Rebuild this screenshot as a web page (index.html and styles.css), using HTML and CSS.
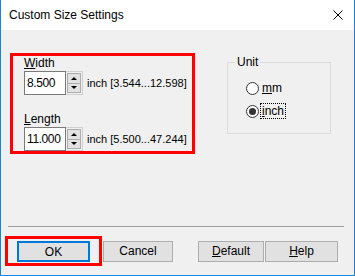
FILE: index.html
```html
<!DOCTYPE html>
<html>
<head>
    <title>Custom Size Settings</title>
    <link rel="stylesheet" href="styles.css">
</head>
<body>
    <div class="window">
        <div class="titlebar">
            <span class="title">Custom Size Settings</span>
            <svg class="close" width="10" height="10" viewBox="0 0 10 10">
                <path d="M0.5 0.5 L9.5 9.5 M9.5 0.5 L0.5 9.5" stroke="#000" stroke-width="1"/>
            </svg>
        </div>
        <div class="content">
            <div class="top">
                <div class="size-box">
                    <div class="field-label"><u>W</u>idth</div>
                    <div class="field">
                        <div class="edit">8.500</div>
                        <div class="spin">
                            <div class="spin-btn"><span class="arrow up"></span></div>
                            <div class="spin-btn"><span class="arrow down"></span></div>
                        </div>
                        <span class="range">inch [3.544...12.598]</span>
                    </div>

                    <div class="field-label second"><u>L</u>ength</div>
                    <div class="field">
                        <div class="edit">11.000</div>
                        <div class="spin">
                            <div class="spin-btn"><span class="arrow up"></span></div>
                            <div class="spin-btn"><span class="arrow down"></span></div>
                        </div>
                        <span class="range">inch [5.500...47.244]</span>
                    </div>
                </div>

                <fieldset class="unit">
                    <legend>Unit</legend>
                    <div class="radios">
                        <div class="radio">
                            <span class="circle"></span>
                            <span class="radio-text"><u>m</u>m</span>
                        </div>
                        <div class="radio">
                            <span class="circle checked"></span>
                            <span class="radio-text focus"><u>i</u>nch</span>
                        </div>
                    </div>
                </fieldset>
            </div>

            <div class="separator"></div>

            <div class="buttons">
                <div class="highlight">
                    <button class="btn btn-focus">OK</button>
                </div>
                <button class="btn btn-cancel">Cancel</button>
                <button class="btn btn-default"><u>D</u>efault</button>
                <button class="btn btn-help"><u>H</u>elp</button>
            </div>
        </div>
    </div>
</body>
</html>
```

FILE: styles.css
```css
body {
    margin: 0;
    font-family: "Liberation Sans", Arial, sans-serif;
    font-size: 12px;
    color: #000;
}

.window {
    width: 355px;
    height: 276px;
    box-sizing: border-box;
    border: 1px solid #1883d7;
    border-top: none;
    display: flex;
    flex-direction: column;
    background-color: #f0f0f0;
}

.titlebar {
    height: 30px;
    background-color: #fff;
    display: flex;
    align-items: center;
    justify-content: space-between;
    padding: 0 11px 0 8px;
}

.title {
    font-size: 12px;
    color: #000;
}

.content {
    flex: 1;
    display: flex;
    flex-direction: column;
}

.top {
    display: flex;
    align-items: flex-start;
    margin-top: 23px;
    padding-left: 9px;
}

.size-box {
    width: 185px;
    height: 101px;
    box-sizing: border-box;
    border: 3px solid #f00;
    padding-left: 11px;
}

.field-label {
    height: 15px;
    line-height: 15px;
}

.field-label.second {
    margin-top: 17px;
}

.field {
    display: flex;
    align-items: center;
    height: 24px;
}

.edit {
    width: 42px;
    height: 24px;
    box-sizing: border-box;
    border: 1px solid #7a7a7a;
    background-color: #fff;
    padding-left: 2px;
    line-height: 22px;
    font-size: 12px;
    letter-spacing: -0.4px;
}

.spin {
    width: 17px;
    height: 24px;
    box-sizing: border-box;
    border: 1px solid #d0d0d0;
    border-left: none;
    padding: 1px;
    display: flex;
    flex-direction: column;
}

.spin-btn {
    flex: 1;
    border: 1px solid #adadad;
    background-color: #e1e1e1;
    display: flex;
    align-items: center;
    justify-content: center;
}

.spin-btn + .spin-btn {
    border-top: none;
}

.arrow {
    width: 0;
    height: 0;
    border-left: 3px solid transparent;
    border-right: 3px solid transparent;
}

.arrow.up {
    border-bottom: 3px solid #000;
}

.arrow.down {
    border-top: 3px solid #000;
}

.range {
    margin-left: 4px;
    font-size: 11px;
}

.unit {
    width: 104px;
    height: 79px;
    box-sizing: border-box;
    margin: 2px 0 0 32px;
    padding: 0;
    border: 1px solid #dcdcdc;
}

.unit legend {
    margin-left: 7px;
    padding: 0 2px;
    line-height: 14px;
}

.radios {
    padding-left: 18px;
    margin-top: 11px;
}

.radio {
    display: flex;
    align-items: center;
    height: 16px;
}

.radio + .radio {
    margin-top: 7px;
}

.circle {
    width: 13px;
    height: 13px;
    box-sizing: border-box;
    border: 1px solid #333;
    border-radius: 50%;
    background-color: #fff;
    display: flex;
    align-items: center;
    justify-content: center;
}

.circle.checked::after {
    content: "";
    width: 7px;
    height: 7px;
    border-radius: 50%;
    background-color: #333;
}

.radio-text {
    margin-left: 3px;
    line-height: 14px;
}

.radio-text.focus {
    margin-left: 2px;
    padding: 0 1px;
    outline: 1px dotted #000;
}

.separator {
    margin: auto 10px 0 7px;
    height: 1px;
    background-color: #a0a0a0;
}

.buttons {
    display: flex;
    align-items: center;
    margin: 9px 0 9px 4px;
}

.highlight {
    border: 3px solid #f00;
    padding: 2px 9px 1px;
}

.btn {
    width: 73px;
    height: 21px;
    box-sizing: border-box;
    border: 1px solid #adadad;
    background-color: #e1e1e1;
    font-family: "Liberation Sans", Arial, sans-serif;
    font-size: 12px;
    color: #000;
    padding: 0;
}

.btn-focus {
    border: 2px solid #0078d7;
}

.btn-cancel {
    margin-left: 1px;
    width: 70px;
}

.btn-default {
    margin-left: 25px;
    width: 66px;
}

.btn-help {
    margin-left: 1px;
}
```
